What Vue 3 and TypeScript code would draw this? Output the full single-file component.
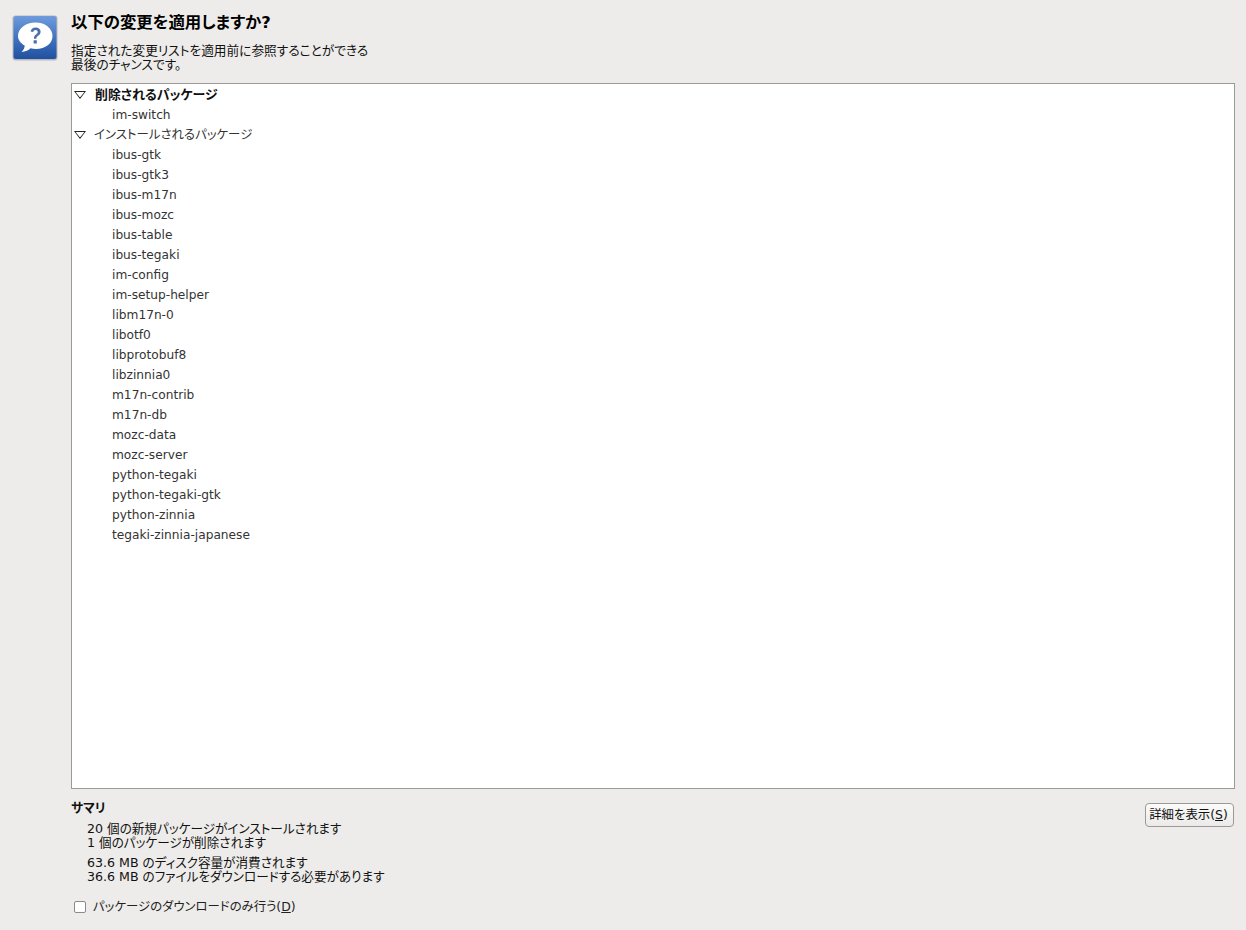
<script setup lang="ts">
const removed: string[] = ['im-switch']
const installed: string[] = ['ibus-gtk','ibus-gtk3','ibus-m17n','ibus-mozc','ibus-table','ibus-tegaki','im-config','im-setup-helper','libm17n-0','libotf0','libprotobuf8','libzinnia0','m17n-contrib','m17n-db','mozc-data','mozc-server','python-tegaki','python-tegaki-gtk','python-zinnia','tegaki-zinnia-japanese']
</script>

<template>
  <div class="dialog">
    <div class="side">
      <svg class="icon" width="46" height="46" viewBox="0 0 46 46">
        <defs>
          <linearGradient id="bg" x1="0" y1="0" x2="0" y2="1">
            <stop offset="0" stop-color="#6f9bdc" />
            <stop offset="0.55" stop-color="#3f71bd" />
            <stop offset="1" stop-color="#20509f" />
          </linearGradient>
        </defs>
        <rect x="0.5" y="0.5" width="45" height="45" rx="3" fill="#8d8f92" opacity="0.55" />
        <rect x="1.5" y="1" width="43" height="43" rx="2.5" fill="url(#bg)" />
        <path d="M23.5 7.5C33.5 7.5 40.5 13.5 40.5 21C40.5 28.5 33.5 34 24 34C22 34 20.2 33.8 18.5 33.3C16.5 35.5 13.5 36.8 9.5 37C11.5 35.2 12.6 33 12.7 30.6C8.5 28.2 6 24.8 6 21C6 13.5 13.5 7.5 23.5 7.5Z" fill="#fff" />
        <path d="M18.6 16.5C19.1 13.8 21.1 12.6 23.6 12.6C26.6 12.6 28.6 14.3 28.6 16.8C28.6 18.8 27.5 19.8 26.1 20.8C24.8 21.7 24.4 22.3 24.4 23.8H21.9C21.9 21.6 22.5 20.6 24 19.5C25.2 18.6 25.7 18 25.7 17C25.7 15.7 24.9 15 23.5 15C22.2 15 21.5 15.7 21.2 17.1Z" fill="#4a6fa8" />
        <rect x="21.6" y="25.2" width="3.2" height="3.2" rx="0.5" fill="#4a6fa8" />
      </svg>
    </div>
    <div class="main">
      <h1 class="title">以下の変更を適用しますか?</h1>
      <p class="intro">指定された変更リストを適用前に参照することができる<br />最後のチャンスです。</p>
      <div class="tree">
        <div class="row head">
          <span class="arrow"></span><b>削除されるパッケージ</b>
        </div>
        <div v-for="p in removed" :key="p" class="row pkg">{{ p }}</div>
        <div class="row head">
          <span class="arrow"></span><span>インストールされるパッケージ</span>
        </div>
        <div v-for="p in installed" :key="p" class="row pkg">{{ p }}</div>
      </div>
      <div class="bottom">
        <div class="summary">
          <div class="sum-title">サマリ</div>
          <div class="sum-group">
            <div>20 個の新規パッケージがインストールされます</div>
            <div>1 個のパッケージが削除されます</div>
          </div>
          <div class="sum-group second">
            <div>63.6 MB のディスク容量が消費されます</div>
            <div>36.6 MB のファイルをダウンロードする必要があります</div>
          </div>
          <label class="check">
            <span class="box"></span>
            <span>パッケージのダウンロードのみ行う(<u>D</u>)</span>
          </label>
        </div>
        <button class="details" type="button">詳細を表示(<u>S</u>)</button>
      </div>
    </div>
  </div>
</template>

<style>
html, body { margin: 0; background: #edecea; }
</style>

<style scoped>
.dialog {
  box-sizing: border-box;
  width: 1246px;
  height: 930px;
  display: flex;
  background: #edecea;
  color: #1a1a1a;
  font-family: "DejaVu Sans", "Noto Sans CJK JP", sans-serif;
  font-size: 12.4px;
  font-feature-settings: "palt";
  overflow: hidden;
}
.side { width: 71px; flex: none; padding: 15px 0 0 12px; box-sizing: border-box; }
.icon { display: block; }
.main { flex: none; width: 1164px; display: flex; flex-direction: column; }
.title { margin: 14px 0 0; font-size: 16.4px; line-height: 18px; font-weight: 700; color: #000; }
.intro { margin: 12px 0 0; font-size: 12.7px; line-height: 14px; color: #111; }
.tree {
  box-sizing: border-box;
  margin-top: 11px;
  height: 706px;
  background: #fff;
  border: 1px solid #9c9a96;
  padding-top: 1px;
  font-size: 12.2px;
  color: #333;
}
.row { height: 20px; line-height: 20px; white-space: nowrap; }
.head { display: flex; align-items: center; padding-left: 2px; font-size: 12.45px; }
.head b { color: #111; font-size: 12.9px; margin-left: 1px; }
.pkg { padding-left: 40px; }
.arrow {
  box-sizing: border-box;
  position: relative;
  width: 12px;
  height: 8px;
  margin-right: 8px;
  flex: none;
  clip-path: polygon(0 0, 100% 0, 50% 100%);
  background: #222;
}
.arrow::after {
  content: "";
  position: absolute;
  left: 1.6px;
  top: 1px;
  width: 8.8px;
  height: 5.4px;
  clip-path: polygon(0 0, 100% 0, 50% 100%);
  background: #fff;
}
.bottom { display: flex; justify-content: space-between; align-items: flex-start; padding-top: 12px; }
.sum-title { font-weight: 700; font-size: 12.6px; line-height: 14px; color: #111; }
.sum-group { margin: 7px 0 0 16px; font-size: 12.6px; line-height: 14px; color: #111; }
.sum-group.second { margin-top: 6px; }
.check { display: flex; align-items: center; margin: 15px 0 0 3px; line-height: 16px; color: #222; }
.box {
  box-sizing: border-box;
  width: 12px;
  height: 12px;
  margin-right: 7px;
  background: #fff;
  border: 1px solid #8c8a86;
  border-radius: 2px;
}
.details {
  box-sizing: border-box;
  margin: 2px 1px 0 0;
  height: 24px;
  width: 89px;
  padding: 0 2px 2px 0;
  font: inherit;
  font-feature-settings: "palt";
  color: #111;
  background: linear-gradient(#fbfbfa, #ebeae8);
  border: 1px solid #9c9a96;
  border-radius: 4px;
}
</style>
